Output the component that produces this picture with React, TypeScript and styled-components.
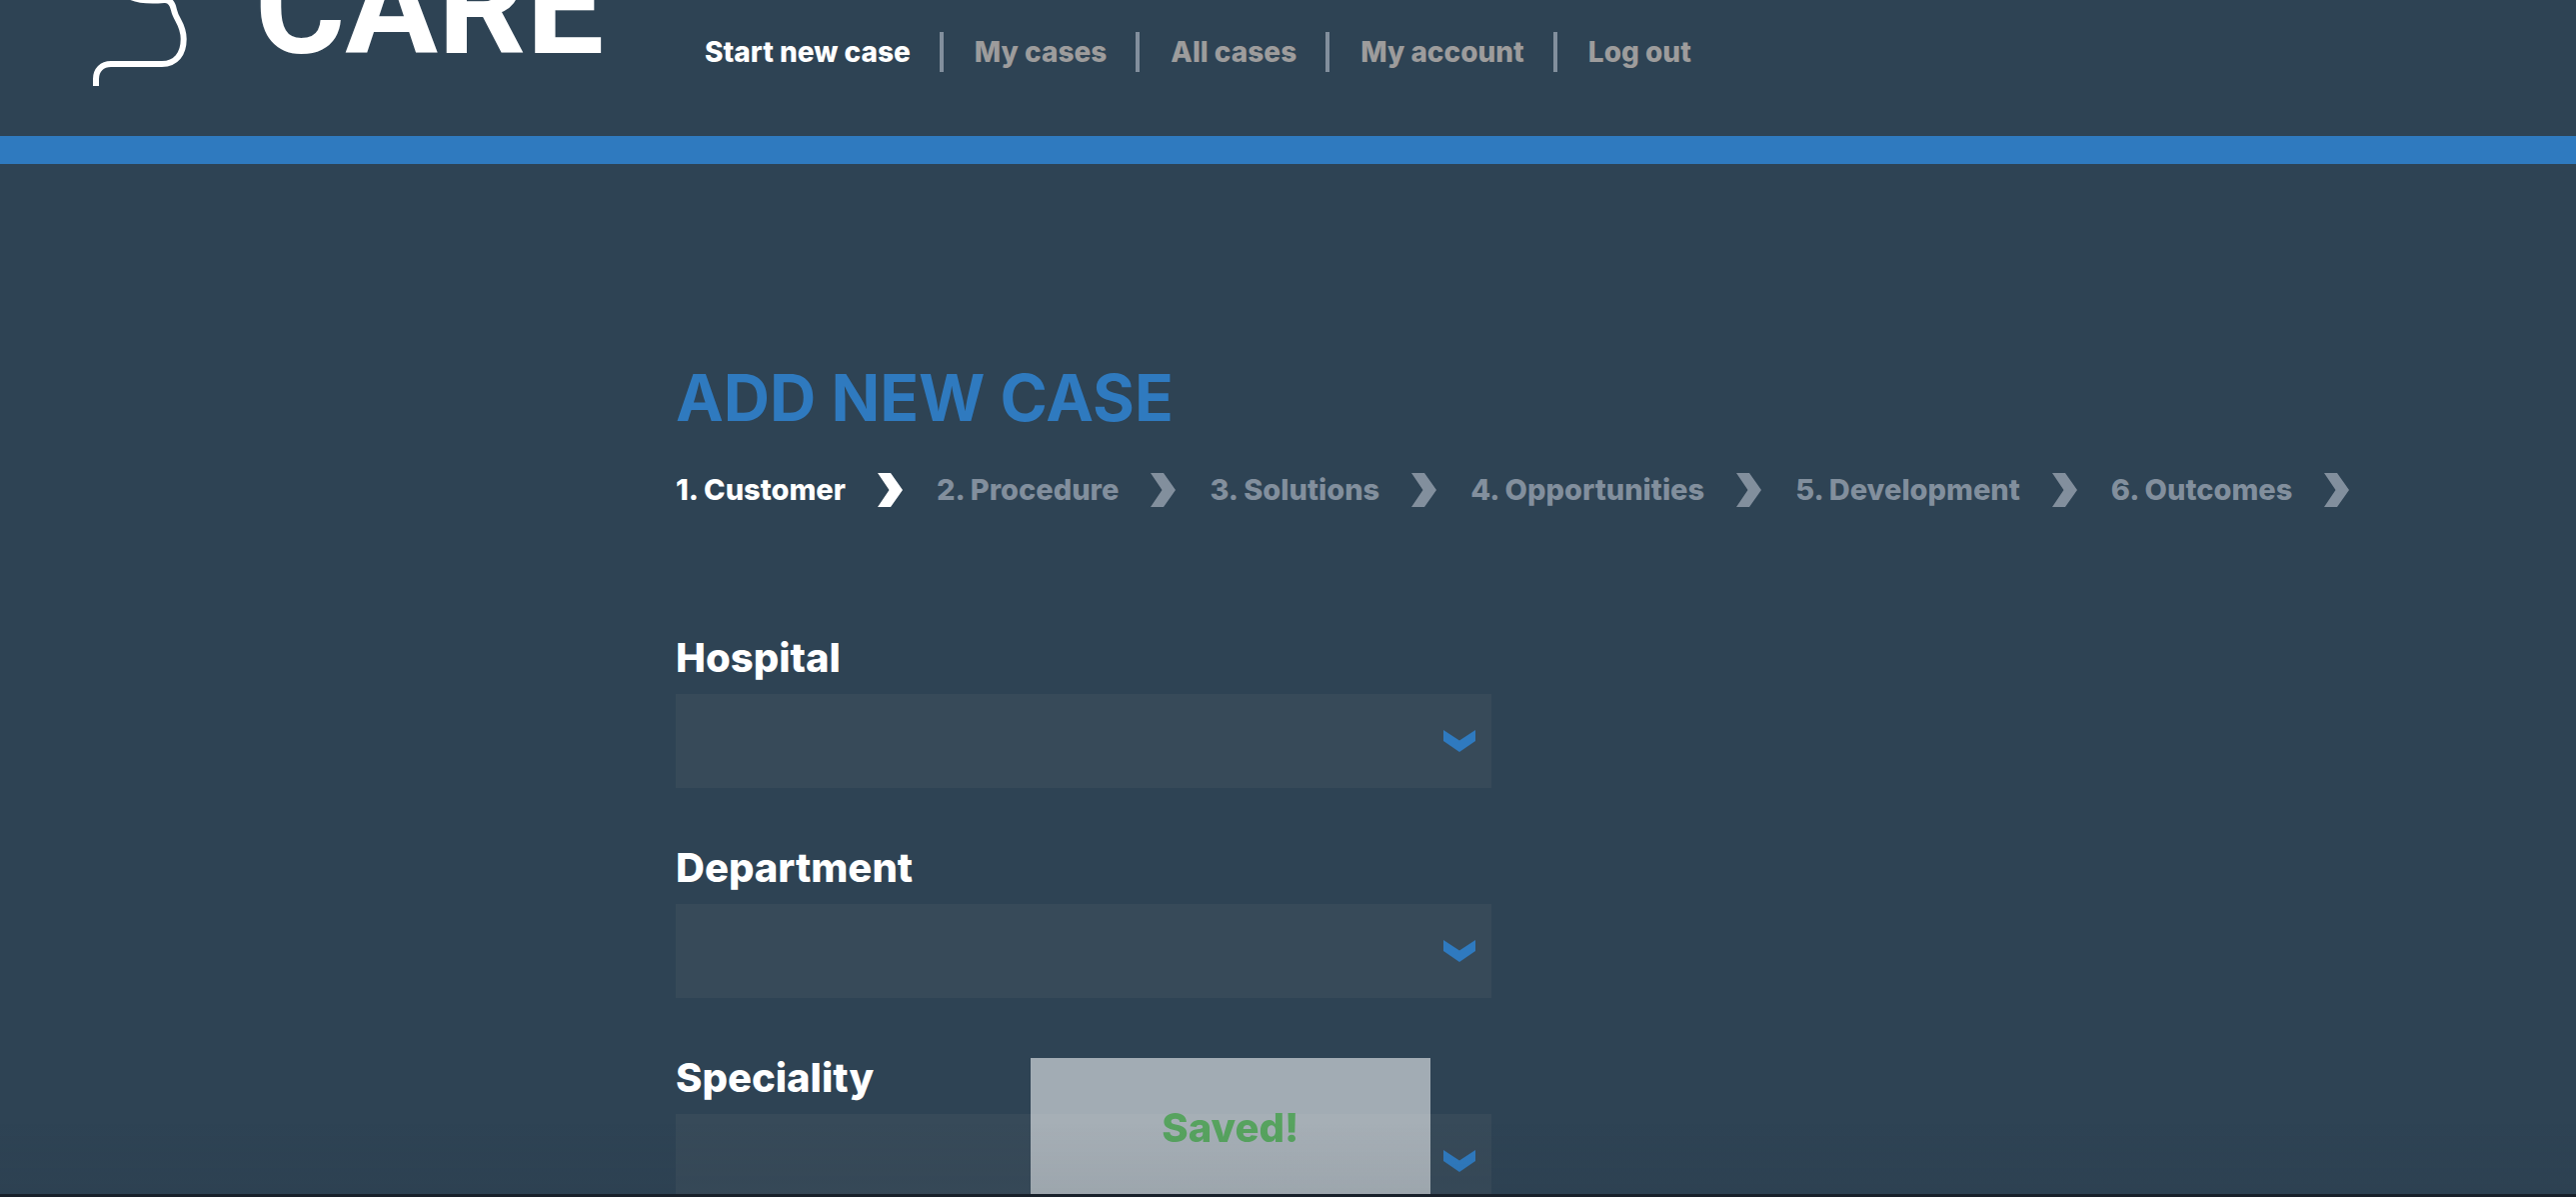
import React from "react";
import styled, { createGlobalStyle } from "styled-components";

const colors = {
  page: "#2e4354",
  accent: "#2f7abf",
  navLink: "#9d9c9c",
  muted: "#828f9d",
  field: "#374a59",
  success: "#57a35f",
};

const GlobalStyle = createGlobalStyle`
  * { box-sizing: border-box; }
  body {
    margin: 0;
    background: ${colors.page};
    color: #fff;
    font-family: Inter, "Liberation Sans", sans-serif;
    font-weight: 800;
  }
`;

const Page = styled.div`
  display: flex;
  flex-direction: column;
  height: 100vh;
  overflow: hidden;
`;

const Header = styled.header`
  display: flex;
  flex: none;
  height: 164px;
  padding-left: 80px;
  overflow: hidden;
  border-bottom: 28px solid ${colors.accent};
`;

const Brand = styled.a`
  display: flex;
  flex: none;
  width: 625px;
  color: #fff;
  text-decoration: none;
`;

const BrandMark = styled.svg`
  flex: none;
  width: 175px;
  height: 100px;
`;

const BrandName = styled.span`
  align-self: flex-start;
  margin-top: -74px;
  font-family: Roboto, sans-serif;
  font-size: 138px;
  font-weight: 700;
  line-height: 160px;
`;

const Nav = styled.nav`
  padding-top: 32px;
`;

const NavList = styled.ul`
  display: flex;
  margin: 0;
  padding: 0;
  list-style: none;
`;

const NavItem = styled.li`
  height: 40px;
  & + & {
    margin-left: 29px;
    padding-left: 31px;
    border-left: 4px solid ${colors.muted};
  }
`;

const NavLink = styled.a<{ $active?: boolean }>`
  color: ${(p) => (p.$active ? "#fff" : colors.navLink)};
  font-size: 28px;
  line-height: 40px;
  text-decoration: none;
  white-space: nowrap;
`;

const Main = styled.main`
  flex: 1 0 auto;
  padding: 198px 80px 0 676px;
`;

const Title = styled.h1`
  margin: 0;
  color: ${colors.accent};
  font-size: 64px;
  font-weight: 700;
  line-height: 72px;
`;

const Steps = styled.ol`
  display: flex;
  margin: 36px 0 0;
  padding: 0;
  list-style: none;
`;

const Step = styled.li<{ $active?: boolean }>`
  display: flex;
  align-items: center;
  gap: 32px;
  margin-right: 34px;
  color: ${(p) => (p.$active ? "#fff" : colors.muted)};
  font-size: 29px;
  line-height: 40px;
  white-space: nowrap;
`;

const StepLink = styled.a`
  color: inherit;
  text-decoration: none;
`;

const StepArrow = styled.svg`
  flex: none;
  width: 25px;
  height: 34px;
  fill: currentColor;
`;

const Form = styled.form`
  display: grid;
  gap: 56px;
  max-width: 816px;
  margin-top: 124px;
`;

const Field = styled.div`
  display: grid;
  gap: 12px;
`;

const Label = styled.label`
  font-size: 40px;
  line-height: 48px;
`;

const SelectWrap = styled.div`
  display: grid;
  align-items: center;
  justify-items: end;
  & > * {
    grid-area: 1 / 1;
  }
`;

const Select = styled.select`
  width: 100%;
  height: 94px;
  padding: 0 64px 0 24px;
  border: 0;
  border-radius: 0;
  appearance: none;
  background: ${colors.field};
  color: #fff;
  font: inherit;
  font-size: 28px;
`;

const SelectArrow = styled.svg`
  width: 32px;
  height: 22px;
  margin-right: 16px;
  fill: ${colors.accent};
  pointer-events: none;
`;

const BottomShade = styled.div`
  position: fixed;
  inset: auto 0 0;
  height: 75px;
  border-bottom: 3px solid #18202a;
  background: linear-gradient(rgba(40, 48, 60, 0), rgba(40, 48, 60, 0.07));
  pointer-events: none;
`;

const Toast = styled.div`
  position: fixed;
  bottom: 3px;
  left: 40%;
  display: flex;
  align-items: center;
  justify-content: center;
  width: 400px;
  height: 136px;
  padding-top: 4px;
  background: rgba(252, 254, 255, 0.565);
  color: ${colors.success};
  font-size: 40px;
  line-height: 48px;
`;

const navItems = ["Start new case", "My cases", "All cases", "My account", "Log out"];

const steps = [
  "1. Customer",
  "2. Procedure",
  "3. Solutions",
  "4. Opportunities",
  "5. Development",
  "6. Outcomes",
];

const fields = ["Hospital", "Department", "Speciality"];

function SelectField({ label }: { label: string }) {
  const id = label.toLowerCase();
  return (
    <Field>
      <Label htmlFor={id}>{label}</Label>
      <SelectWrap>
        <Select id={id} name={id} defaultValue="">
          <option value="" />
        </Select>
        <SelectArrow viewBox="0 0 32 22" aria-hidden="true">
          <path d="M0 0L16 10.500L32 0V11L16 22L0 11Z" />
        </SelectArrow>
      </SelectWrap>
    </Field>
  );
}

export default function App() {
  return (
    <>
      <GlobalStyle />
      <Page>
        <Header>
          <Brand href="#home">
            <BrandMark viewBox="0 0 175 100" fill="none" aria-hidden="true">
              <path
                d="M49-4C58 1 72 1 84 0C91-1 93 5 94 10C96 20 103.700 24 103.700 39C103.700 54 96 64 82 64H31C22 64 16 70 16 79V86"
                stroke="#fff"
                strokeWidth="6"
              />
            </BrandMark>
            <BrandName>CARE</BrandName>
          </Brand>
          <Nav aria-label="Main">
            <NavList>
              {navItems.map((item, i) => (
                <NavItem key={item}>
                  <NavLink href="#" $active={i === 0}>
                    {item}
                  </NavLink>
                </NavItem>
              ))}
            </NavList>
          </Nav>
        </Header>
        <Main>
          <Title>ADD NEW CASE</Title>
          <Steps>
            {steps.map((step, i) => (
              <Step key={step} $active={i === 0}>
                <StepLink href="#">{step}</StepLink>
                <StepArrow viewBox="0 0 25 34" aria-hidden="true">
                  <path d="M0 0H13L25 17L13 34H0L11.500 17Z" />
                </StepArrow>
              </Step>
            ))}
          </Steps>
          <Form>
            {fields.map((field) => (
              <SelectField key={field} label={field} />
            ))}
          </Form>
        </Main>
      </Page>
      <Toast role="status">Saved!</Toast>
      <BottomShade />
    </>
  );
}
